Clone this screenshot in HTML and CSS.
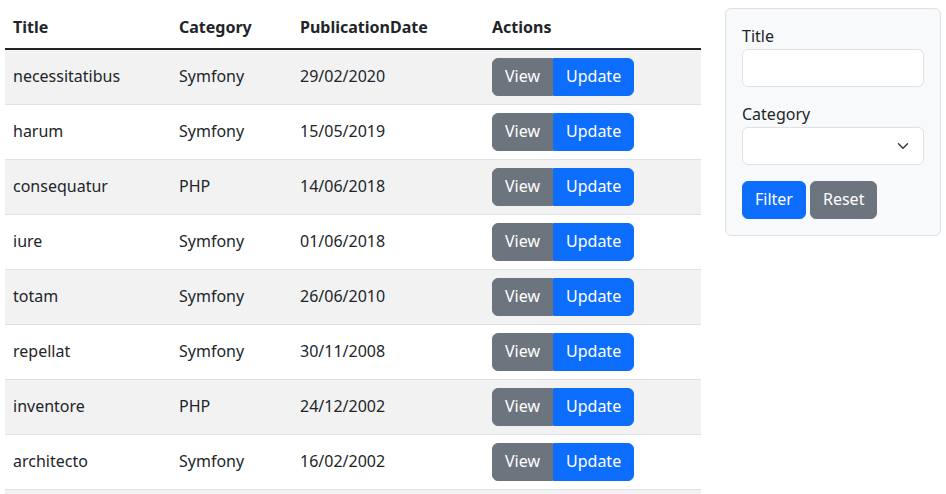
FILE: index.html
```html
<!DOCTYPE html>
<html lang="en">
<head>
<meta charset="utf-8">
<title>Articles</title>
<link rel="stylesheet" href="styles.css">
</head>
<body>
<div class="page">
  <div class="main">
    <table class="table">
      <thead>
        <tr>
          <th class="c-title">Title</th>
          <th class="c-cat">Category</th>
          <th class="c-date">PublicationDate</th>
          <th class="c-act">Actions</th>
        </tr>
      </thead>
      <tbody>
        <tr><td>necessitatibus</td><td>Symfony</td><td>29/02/2020</td><td class="act"><div class="btn-group"><a class="btn btn-secondary">View</a><a class="btn btn-primary">Update</a></div></td></tr>
        <tr><td>harum</td><td>Symfony</td><td>15/05/2019</td><td class="act"><div class="btn-group"><a class="btn btn-secondary">View</a><a class="btn btn-primary">Update</a></div></td></tr>
        <tr><td>consequatur</td><td>PHP</td><td>14/06/2018</td><td class="act"><div class="btn-group"><a class="btn btn-secondary">View</a><a class="btn btn-primary">Update</a></div></td></tr>
        <tr><td>iure</td><td>Symfony</td><td>01/06/2018</td><td class="act"><div class="btn-group"><a class="btn btn-secondary">View</a><a class="btn btn-primary">Update</a></div></td></tr>
        <tr><td>totam</td><td>Symfony</td><td>26/06/2010</td><td class="act"><div class="btn-group"><a class="btn btn-secondary">View</a><a class="btn btn-primary">Update</a></div></td></tr>
        <tr><td>repellat</td><td>Symfony</td><td>30/11/2008</td><td class="act"><div class="btn-group"><a class="btn btn-secondary">View</a><a class="btn btn-primary">Update</a></div></td></tr>
        <tr><td>inventore</td><td>PHP</td><td>24/12/2002</td><td class="act"><div class="btn-group"><a class="btn btn-secondary">View</a><a class="btn btn-primary">Update</a></div></td></tr>
        <tr><td>architecto</td><td>Symfony</td><td>16/02/2002</td><td class="act"><div class="btn-group"><a class="btn btn-secondary">View</a><a class="btn btn-primary">Update</a></div></td></tr>
        <tr class="row-more"><td></td><td></td><td></td><td></td></tr>
      </tbody>
    </table>
  </div>
  <aside class="side">
    <form class="card">
      <div class="field">
        <label class="label" for="title">Title</label>
        <input class="input" id="title" type="text">
      </div>
      <div class="field">
        <label class="label" for="category">Category</label>
        <div class="select">
          <span class="select-value"></span>
          <svg class="chev" viewBox="0 0 16 16" width="16" height="12"><path d="m2 5 6 6 6-6" fill="none" stroke="#343a40" stroke-width="2" stroke-linecap="round" stroke-linejoin="round"/></svg>
        </div>
      </div>
      <div class="actions">
        <button class="btn btn-primary btn-round" type="button">Filter</button>
        <button class="btn btn-secondary btn-round" type="button">Reset</button>
      </div>
    </form>
  </aside>
</div>
</body>
</html>
```
FILE: styles.css
```css
* { box-sizing: border-box; }
html, body { margin: 0; padding: 0; }
body {
  font-family: "Noto Sans", "Open Sans", sans-serif;
  font-size: 16px;
  line-height: 24px;
  color: #212529;
  background: #fff;
  overflow: hidden;
}
.page {
  display: flex;
  align-items: flex-start;
  gap: 24px;
  padding: 8px 5px 0 5px;
}
.main { width: 696px; flex: none; }
.table {
  width: 696px;
  border-collapse: collapse;
  table-layout: fixed;
}
.c-title { width: 166px; }
.c-cat { width: 121px; }
.c-date { width: 192px; }
.c-act { width: 217px; }
.table th {
  text-align: left;
  font-weight: 700;
  padding: 7px 8px 9px;
  height: 40px;
  vertical-align: middle;
}
.table thead tr { border-bottom: 2px solid #212529; }
.table td {
  padding: 7px 8px 9px;
  vertical-align: middle;
  border-bottom: 1px solid #dee2e6;
  height: 55px;
}
.table td.act { padding: 8px; }
.table tbody tr:nth-child(odd) td { background: #f2f2f2; }
.btn-group { display: inline-flex; vertical-align: top; }
.btn {
  display: inline-block;
  font-family: inherit;
  font-size: 16px;
  line-height: 24px;
  padding: 5px 12px 7px;
  border: 1px solid transparent;
  color: #fff;
  cursor: pointer;
}
.btn-secondary { background: #6c757d; border-color: #6c757d; }
.btn-primary { background: #0d6efd; border-color: #0d6efd; }
.btn-group .btn:first-child { border-radius: 6px 0 0 6px; }
.btn-group .btn:last-child { border-radius: 0 6px 6px 0; }
.btn-round { border-radius: 6px; }
.side { width: 216px; flex: none; }
.card {
  background: #f8f9fa;
  border: 1px solid #dee2e6;
  border-radius: 6px;
  padding: 16px;
  display: flex;
  flex-direction: column;
  gap: 16px;
}
.field { display: flex; flex-direction: column; }
.label { display: block; margin-top: -1px; margin-bottom: 1px; }
.input, .select {
  height: 38px;
  width: 100%;
  border: 1px solid #dee2e6;
  border-radius: 6px;
  background: #fff;
  font: inherit;
}
.select {
  display: flex;
  align-items: center;
  justify-content: space-between;
  padding: 0 12px;
}
.chev { display: block; }
.actions { display: flex; gap: 4px; }
```
